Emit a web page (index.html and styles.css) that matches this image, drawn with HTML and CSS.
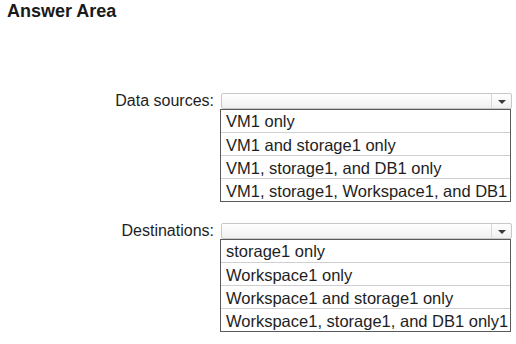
FILE: index.html
```html
<!DOCTYPE html>
<html>
<head>
<meta charset="utf-8">
<link rel="stylesheet" href="styles.css">
</head>
<body>
<div class="page">
  <h1 class="title">Answer Area</h1>
  <div class="field field-first">
    <div class="label">Data sources:</div>
    <div class="control">
      <div class="select"><span class="select-btn"><span class="arrow"></span></span></div>
      <ul class="list">
        <li>VM1 only</li>
        <li>VM1 and storage1 only</li>
        <li>VM1, storage1, and DB1 only</li>
        <li>VM1, storage1, Workspace1, and DB1</li>
      </ul>
    </div>
  </div>
  <div class="field field-second">
    <div class="label">Destinations:</div>
    <div class="control">
      <div class="select"><span class="select-btn"><span class="arrow"></span></span></div>
      <ul class="list">
        <li>storage1 only</li>
        <li>Workspace1 only</li>
        <li>Workspace1 and storage1 only</li>
        <li>Workspace1, storage1, and DB1 only1</li>
      </ul>
    </div>
  </div>
</div>
</body>
</html>
```
FILE: styles.css
```css
html, body {
  margin: 0;
  padding: 0;
  background: #ffffff;
}
body {
  font-family: "Liberation Sans", Arial, sans-serif;
  color: #1e1e1e;
}
.page {
  width: 516px;
  height: 344px;
  overflow: hidden;
}
.title {
  margin: 0;
  padding: 1px 0 0 7px;
  font-size: 18px;
  line-height: 20px;
  font-weight: bold;
  color: #1a1a1a;
}
.field {
  display: grid;
  grid-template-columns: 220px 292px;
  align-items: start;
}
.field-first {
  margin-top: 72px;
}
.field-second {
  margin-top: 21px;
}
.label {
  font-size: 16px;
  line-height: 16px;
  text-align: right;
  padding-right: 6px;
  margin-top: 0;
}
.control {
  display: flex;
  flex-direction: column;
}
.select {
  box-sizing: border-box;
  height: 16px;
  width: 291px;
  margin-left: 1px;
  border: 1px solid #c8c8c8;
  border-radius: 2px;
  background: linear-gradient(#ffffff, #f0f0f0);
  display: flex;
  justify-content: flex-end;
}
.select-btn {
  width: 19px;
  border-left: 1px solid #d8d8d8;
  display: flex;
  align-items: center;
  justify-content: center;
}
.arrow {
  width: 0;
  height: 0;
  border-left: 4px solid transparent;
  border-right: 4px solid transparent;
  border-top: 4px solid #3a3a3a;
  margin-top: 1px;
}
.list {
  list-style: none;
  margin: 0;
  padding: 0;
  width: 291px;
  box-sizing: border-box;
  border: 1px solid #5a5a5a;
}
.list li {
  height: 23px;
  box-sizing: border-box;
  padding: 2px 0 0 5px;
  font-size: 16.5px;
  line-height: 20px;
  white-space: nowrap;
  border-top: 1px solid #cfcfcf;
}
.list li:first-child {
  border-top: none;
  height: 22px;
  padding-top: 1px;
}
```
